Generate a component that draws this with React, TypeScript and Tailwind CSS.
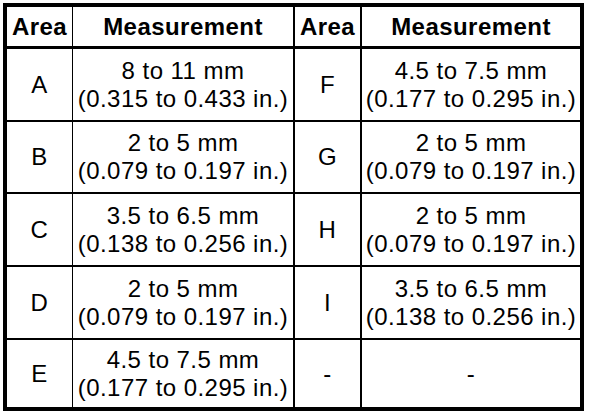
import React from "react";

const rows: [string, string, string, string, string, string][] = [
  ["A", "8 to 11 mm", "(0.315 to 0.433 in.)", "F", "4.5 to 7.5 mm", "(0.177 to 0.295 in.)"],
  ["B", "2 to 5 mm", "(0.079 to 0.197 in.)", "G", "2 to 5 mm", "(0.079 to 0.197 in.)"],
  ["C", "3.5 to 6.5 mm", "(0.138 to 0.256 in.)", "H", "2 to 5 mm", "(0.079 to 0.197 in.)"],
  ["D", "2 to 5 mm", "(0.079 to 0.197 in.)", "I", "3.5 to 6.5 mm", "(0.138 to 0.256 in.)"],
  ["E", "4.5 to 7.5 mm", "(0.177 to 0.295 in.)", "-", "-", ""],
];

const heights = ["h-[73px]", "h-[72px]", "h-[73px]", "h-[73px]", "h-[67px]"];

export default function App() {
  return (
    <div className="w-[608px] h-[418px] bg-white pl-[3px] pt-[3px] text-black font-['Liberation_Sans',Arial,sans-serif] tracking-[0.45px]">
      <div className="w-[581px] border-4 border-black grid grid-cols-[66px_222px_67px_218px]">
        <div className="h-[42px] border-r border-b-[3px] border-black flex items-center justify-center text-[24px] font-bold">Area</div>
        <div className="h-[42px] border-r-2 border-b-[3px] border-black flex items-center justify-center text-[24px] font-bold">Measurement</div>
        <div className="h-[42px] border-r-2 border-b-[3px] border-black flex items-center justify-center text-[24px] font-bold">Area</div>
        <div className="h-[42px] border-b-[3px] border-black flex items-center justify-center text-[24px] font-bold">Measurement</div>
        {rows.map((r, i) => {
          const last = i === rows.length - 1;
          const b = last ? "" : "border-b-2";
          const h = heights[i];
          return (
            <React.Fragment key={i}>
              <div className={`${h} ${b} border-r border-black flex items-center justify-center text-[24px]`}>{r[0]}</div>
              <div className={`${h} ${b} border-r-2 border-black flex flex-col items-center justify-center text-[24px] leading-[28px]`}>
                <span>{r[1]}</span>
                <span>{r[2]}</span>
              </div>
              <div className={`${h} ${b} border-r-2 border-black flex items-center justify-center text-[24px]`}>{r[3]}</div>
              <div className={`${h} ${b} border-black flex flex-col items-center justify-center text-[24px] leading-[28px]`}>
                <span>{r[4]}</span>
                {r[5] && <span>{r[5]}</span>}
              </div>
            </React.Fragment>
          );
        })}
      </div>
    </div>
  );
}
